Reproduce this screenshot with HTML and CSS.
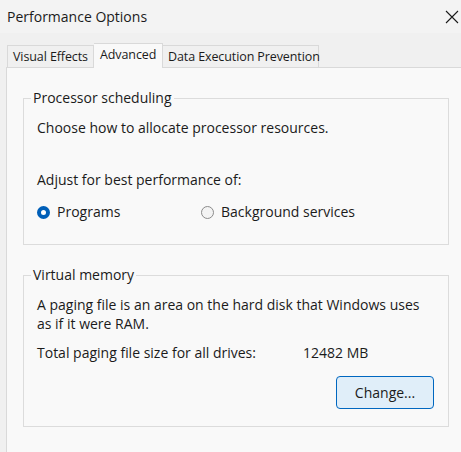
FILE: index.html
```html
<!DOCTYPE html>
<html>
<head>
<meta charset="utf-8">
<link rel="stylesheet" href="styles.css">
</head>
<body>
<div class="window">
  <div class="titlebar">
    <span class="title">Performance Options</span>
    <svg class="close" width="14" height="14" viewBox="0 0 14 14"><path d="M1 1 L13 13 M13 1 L1 13" stroke="#1a1a1a" stroke-width="1.1" fill="none"/></svg>
  </div>
  <div class="tabs">
    <div class="tab tab-visual">Visual Effects</div>
    <div class="tab tab-adv active">Advanced</div>
    <div class="tab tab-dep">Data Execution Prevention</div>
  </div>
  <div class="panel">
    <fieldset class="group group-cpu">
      <legend>Processor scheduling</legend>
      <p class="line first">Choose how to allocate processor resources.</p>
      <p class="line adjust">Adjust for best performance of:</p>
      <div class="radios">
        <label class="radio"><span class="dot checked"></span>Programs</label>
        <label class="radio"><span class="dot"></span>Background services</label>
      </div>
    </fieldset>
    <fieldset class="group group-vm">
      <legend>Virtual memory</legend>
      <p class="line first">A paging file is an area on the hard disk that Windows uses<br>as if it were RAM.</p>
      <div class="total">
        <span class="total-label">Total paging file size for all drives:</span>
        <span class="total-value">12482 MB</span>
      </div>
      <div class="actions">
        <button class="btn">Change...</button>
      </div>
    </fieldset>
  </div>
</div>
</body>
</html>
```

FILE: styles.css
```css
html, body {
  margin: 0;
  padding: 0;
  background: #f0f0f0;
  overflow: hidden;
}
body {
  width: 461px;
  height: 452px;
  font-family: "Open Sans", "Noto Sans", sans-serif;
  font-size: 14px;
  color: #1b1b1b;
}
.window {
  width: 461px;
  height: 452px;
  overflow: hidden;
}
.titlebar {
  height: 33px;
  display: flex;
  align-items: center;
  justify-content: space-between;
  padding: 0 2px 0 7px;
  background: #f3f3f3;
  box-sizing: border-box;
}
.title {
  line-height: 20px;
}
.close {
  display: block;
}
.tabs {
  height: 34px;
  display: flex;
  align-items: flex-end;
  padding-left: 7px;
  box-sizing: border-box;
}
.tab {
  height: 22px;
  box-sizing: border-box;
  border: 1px solid #d9d9d9;
  border-bottom: none;
  padding: 0 0 0 5px;
  font-size: 12.5px;
  letter-spacing: -0.1px;
  line-height: 21px;
  background: #f0f0f0;
  white-space: nowrap;
}
.tab-visual {
  width: 87px;
}
.tab-adv {
  width: 69px;
}
.tab-dep {
  width: 156px;
  border-left: none;
}
.tab.active {
  height: 25px;
  margin-bottom: -1px;
  padding-left: 6px;
  line-height: 21px;
  background: #f9f9f9;
  border-left: none;
  position: relative;
  z-index: 1;
}
.panel {
  margin-left: 6px;
  width: 480px;
  height: 400px;
  background: #f9f9f9;
  border-top: 1px solid #d9d9d9;
  border-left: 1px solid #d9d9d9;
  box-sizing: border-box;
  padding: 20px 0 0 16px;
}
.group {
  width: 426px;
  box-sizing: border-box;
  margin: 0;
  border: 1px solid #dcdcdc;
  padding: 0 13px;
  min-width: 0;
}
.group legend {
  line-height: 20px;
  padding: 0 2px;
  margin-left: -6px;
}
.group-cpu {
  padding-bottom: 22px;
}
.group-vm {
  margin-top: 20px;
  padding-bottom: 17px;
}
.line {
  margin: 0;
  line-height: 19px;
}
.line.first {
  margin-top: 10px;
}
.line.adjust {
  margin-top: 33px;
}
.radios {
  margin-top: 13px;
  display: flex;
  height: 20px;
  align-items: center;
}
.radio {
  display: flex;
  align-items: center;
  gap: 7px;
  line-height: 20px;
}
.radio:first-child {
  width: 164px;
}
.dot {
  width: 13px;
  height: 13px;
  box-sizing: border-box;
  border-radius: 50%;
  border: 1px solid #8b8b8b;
  background: #f3f3f3;
}
.dot.checked {
  border: 4px solid #005fb8;
  background: #ffffff;
}
.total {
  margin-top: 10px;
  display: flex;
  line-height: 20px;
}
.total-label {
  width: 266px;
}
.actions {
  margin-top: 13px;
  display: flex;
  justify-content: flex-end;
  padding-right: 1px;
}
.btn {
  width: 98px;
  height: 33px;
  box-sizing: border-box;
  border: 1px solid #0067c0;
  border-radius: 4px;
  background: #e0eef9;
  font-family: inherit;
  font-size: 14px;
  color: #1b1b1b;
  padding: 0;
}
```
